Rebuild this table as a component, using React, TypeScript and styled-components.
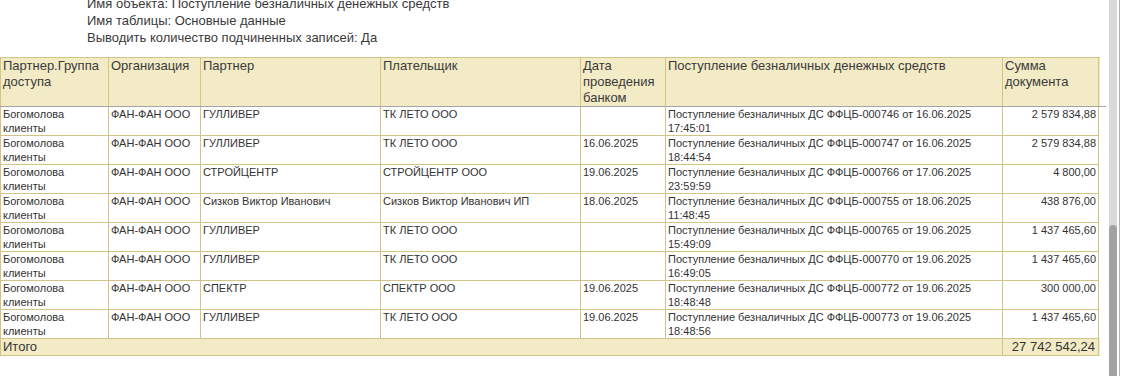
import React from "react";
import styled, { createGlobalStyle } from "styled-components";

type Row = {
  group: string;
  org: string;
  partner: string;
  payer: string;
  date: string;
  doc: string;
  sum: string;
};

const headers = [
  "Партнер.Группа\nдоступа",
  "Организация",
  "Партнер",
  "Плательщик",
  "Дата\nпроведения\nбанком",
  "Поступление безналичных денежных средств",
  "Сумма\nдокумента",
];

const doc = (num: string, date: string, time: string) =>
  `Поступление безналичных ДС ФФЦБ-${num} от ${date}\n${time}`;

const rows: Row[] = [
  { group: "Богомолова\nклиенты", org: "ФАН-ФАН ООО", partner: "ГУЛЛИВЕР", payer: "ТК ЛЕТО ООО", date: "", doc: doc("000746", "16.06.2025", "17:45:01"), sum: "2 579 834,88" },
  { group: "Богомолова\nклиенты", org: "ФАН-ФАН ООО", partner: "ГУЛЛИВЕР", payer: "ТК ЛЕТО ООО", date: "16.06.2025", doc: doc("000747", "16.06.2025", "18:44:54"), sum: "2 579 834,88" },
  { group: "Богомолова\nклиенты", org: "ФАН-ФАН ООО", partner: "СТРОЙЦЕНТР", payer: "СТРОЙЦЕНТР ООО", date: "19.06.2025", doc: doc("000766", "17.06.2025", "23:59:59"), sum: "4 800,00" },
  { group: "Богомолова\nклиенты", org: "ФАН-ФАН ООО", partner: "Сизков Виктор Иванович", payer: "Сизков Виктор Иванович ИП", date: "18.06.2025", doc: doc("000755", "18.06.2025", "11:48:45"), sum: "438 876,00" },
  { group: "Богомолова\nклиенты", org: "ФАН-ФАН ООО", partner: "ГУЛЛИВЕР", payer: "ТК ЛЕТО ООО", date: "", doc: doc("000765", "19.06.2025", "15:49:09"), sum: "1 437 465,60" },
  { group: "Богомолова\nклиенты", org: "ФАН-ФАН ООО", partner: "ГУЛЛИВЕР", payer: "ТК ЛЕТО ООО", date: "", doc: doc("000770", "19.06.2025", "16:49:05"), sum: "1 437 465,60" },
  { group: "Богомолова\nклиенты", org: "ФАН-ФАН ООО", partner: "СПЕКТР", payer: "СПЕКТР ООО", date: "19.06.2025", doc: doc("000772", "19.06.2025", "18:48:48"), sum: "300 000,00" },
  { group: "Богомолова\nклиенты", org: "ФАН-ФАН ООО", partner: "ГУЛЛИВЕР", payer: "ТК ЛЕТО ООО", date: "19.06.2025", doc: doc("000773", "19.06.2025", "18:48:56"), sum: "1 437 465,60" },
];

const COLS = "108px 92px 180px 200px 85px 337px 96px";
const TAN = "#d2c386";
const BEIGE = "#f3ebc6";

const GlobalStyle = createGlobalStyle`
  body {
    margin: 0;
    background: #fff;
    font-family: "Liberation Sans", Arial, sans-serif;
    color: #333;
    overflow: hidden;
  }
`;

const Page = styled.div`
  display: flex;
  height: 376px;
  overflow: hidden;
`;

const Sheet = styled.div`
  width: 1109px;
  flex-shrink: 0;
`;

const Info = styled.div`
  margin-top: -5px;
  padding-left: 87px;
  font-size: 13px;
  line-height: 17px;
  color: #3a3a3a;
`;

const Table = styled.div`
  margin-top: 11px;
`;

const Grid = styled.div<{ $head?: boolean }>`
  display: grid;
  grid-template-columns: ${COLS};
  width: 1099px;
  border-left: 1px solid ${TAN};
  border-top: ${(p) => (p.$head ? `1px solid ${TAN}` : "none")};
  background: ${(p) => (p.$head ? BEIGE : "#fff")};
`;

const HeadCell = styled.div`
  border-right: 1px solid ${TAN};
  padding: 0 2px;
  font-size: 13px;
  line-height: 16px;
  height: 48px;
  white-space: pre-line;
  color: #3a3a3a;
`;

const FreezeLine = styled.div`
  width: 1106px;
  height: 1px;
  background: #a4a4a4;
`;

const Cell = styled.div<{ $right?: boolean }>`
  border-right: 1px solid ${TAN};
  border-bottom: 1px solid ${TAN};
  padding: 0 2px;
  height: 28px;
  font-size: 11px;
  line-height: 14px;
  white-space: pre-line;
  text-align: ${(p) => (p.$right ? "right" : "left")};
  overflow: hidden;
`;

const TotalRow = styled.div`
  display: grid;
  grid-template-columns: 1002px 96px;
  width: 1099px;
  border-left: 1px solid ${TAN};
  background: ${BEIGE};
`;

const TotalCell = styled.div<{ $right?: boolean }>`
  border-right: 1px solid ${TAN};
  border-bottom: 1px solid ${TAN};
  padding: 0 3px 0 2px;
  height: 16px;
  font-size: 13px;
  line-height: 16px;
  text-align: ${(p) => (p.$right ? "right" : "left")};
`;

const ScrollArea = styled.div`
  display: flex;
  gap: 2px;
`;

const Track = styled.div`
  width: 8px;
  display: flex;
  flex-direction: column;
  background: #d9d9d9;
`;

const TrackSpace = styled.div`
  height: 225px;
`;

const Thumb = styled.div`
  flex: 1;
  background: #a2a2a2;
  border-radius: 4px 4px 0 0;
`;

const Edge = styled.div`
  width: 1px;
  background: #b4b4b4;
`;

export default function App() {
  return (
    <>
      <GlobalStyle />
      <Page>
        <Sheet>
          <Info>
            <div>Имя объекта: Поступление безналичных денежных средств</div>
            <div>Имя таблицы: Основные данные</div>
            <div>Выводить количество подчиненных записей: Да</div>
          </Info>
          <Table>
            <Grid $head>
              {headers.map((h) => (
                <HeadCell key={h}>{h}</HeadCell>
              ))}
            </Grid>
            <FreezeLine />
            <Grid>
              {rows.map((r, i) => (
                <React.Fragment key={i}>
                  <Cell>{r.group}</Cell>
                  <Cell>{r.org}</Cell>
                  <Cell>{r.partner}</Cell>
                  <Cell>{r.payer}</Cell>
                  <Cell>{r.date}</Cell>
                  <Cell>{r.doc}</Cell>
                  <Cell $right>{r.sum}</Cell>
                </React.Fragment>
              ))}
            </Grid>
            <TotalRow>
              <TotalCell>Итого</TotalCell>
              <TotalCell $right>27 742 542,24</TotalCell>
            </TotalRow>
          </Table>
        </Sheet>
        <ScrollArea>
          <Track>
            <TrackSpace />
            <Thumb />
          </Track>
          <Edge />
        </ScrollArea>
      </Page>
    </>
  );
}
